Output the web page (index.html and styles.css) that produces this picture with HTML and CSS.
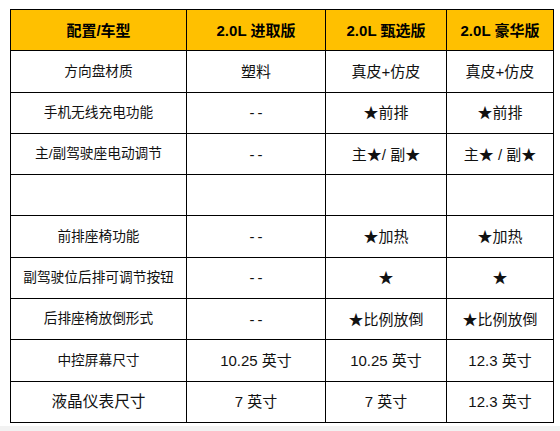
FILE: index.html
```html
<!DOCTYPE html>
<html lang="zh">
<head>
<meta charset="utf-8">
<link rel="stylesheet" href="styles.css">
</head>
<body>
<div class="wrap">
<table class="spec">
<colgroup>
<col class="c1"><col class="c2"><col class="c3"><col class="c4">
</colgroup>
<thead>
<tr><th>配置/车型</th><th>2.0L 进取版</th><th>2.0L 甄选版</th><th>2.0L 豪华版</th></tr>
</thead>
<tbody>
<tr><td>方向盘材质</td><td>塑料</td><td>真皮+仿皮</td><td>真皮+仿皮</td></tr>
<tr><td>手机无线充电功能</td><td><span class="dash">--</span></td><td>★前排</td><td>★前排</td></tr>
<tr><td>主/副驾驶座电动调节</td><td><span class="dash">--</span></td><td>主★/ 副★</td><td>主★ / 副★</td></tr>
<tr><td></td><td></td><td></td><td></td></tr>
<tr><td>前排座椅功能</td><td><span class="dash">--</span></td><td>★加热</td><td>★加热</td></tr>
<tr><td>副驾驶位后排可调节按钮</td><td><span class="dash">--</span></td><td>★</td><td>★</td></tr>
<tr><td>后排座椅放倒形式</td><td><span class="dash">--</span></td><td>★比例放倒</td><td>★比例放倒</td></tr>
<tr><td>中控屏幕尺寸</td><td>10.25 英寸</td><td>10.25 英寸</td><td>12.3 英寸</td></tr>
<tr class="big"><td>液晶仪表尺寸</td><td>7 英寸</td><td>7 英寸</td><td>12.3 英寸</td></tr>
</tbody>
</table>
</div>
<div class="strip"></div>
</body>
</html>
```
FILE: styles.css
```css
html, body {
  margin: 0;
  padding: 0;
  background: #fff;
}
.wrap {
  padding: 9px 0 0 10px;
}
.spec {
  border-collapse: collapse;
  table-layout: fixed;
  width: 543px;
  font-family: "Liberation Sans", "Noto Sans CJK SC", sans-serif;
  color: #111;
}
.c1 { width: 176px; }
.c2 { width: 139px; }
.c3 { width: 121px; }
.c4 { width: 107px; }
.spec th, .spec td {
  border: 1px solid #000;
  height: 40.3px;
  padding: 0;
  text-align: center;
  vertical-align: middle;
  font-size: 15px;
  line-height: 1;
}
.spec th {
  background: #ffc000;
  font-weight: bold;
  color: #000;
}
.spec td {
  font-weight: normal;
}
.spec td:first-child {
  font-size: 13.7px;
}
.spec .big td:first-child {
  font-size: 15.7px;
}
.dash {
  letter-spacing: 3px;
  margin-right: -3px;
}
.strip {
  margin-top: 3px;
  height: 10px;
  background: #f2f2f2;
}
```
